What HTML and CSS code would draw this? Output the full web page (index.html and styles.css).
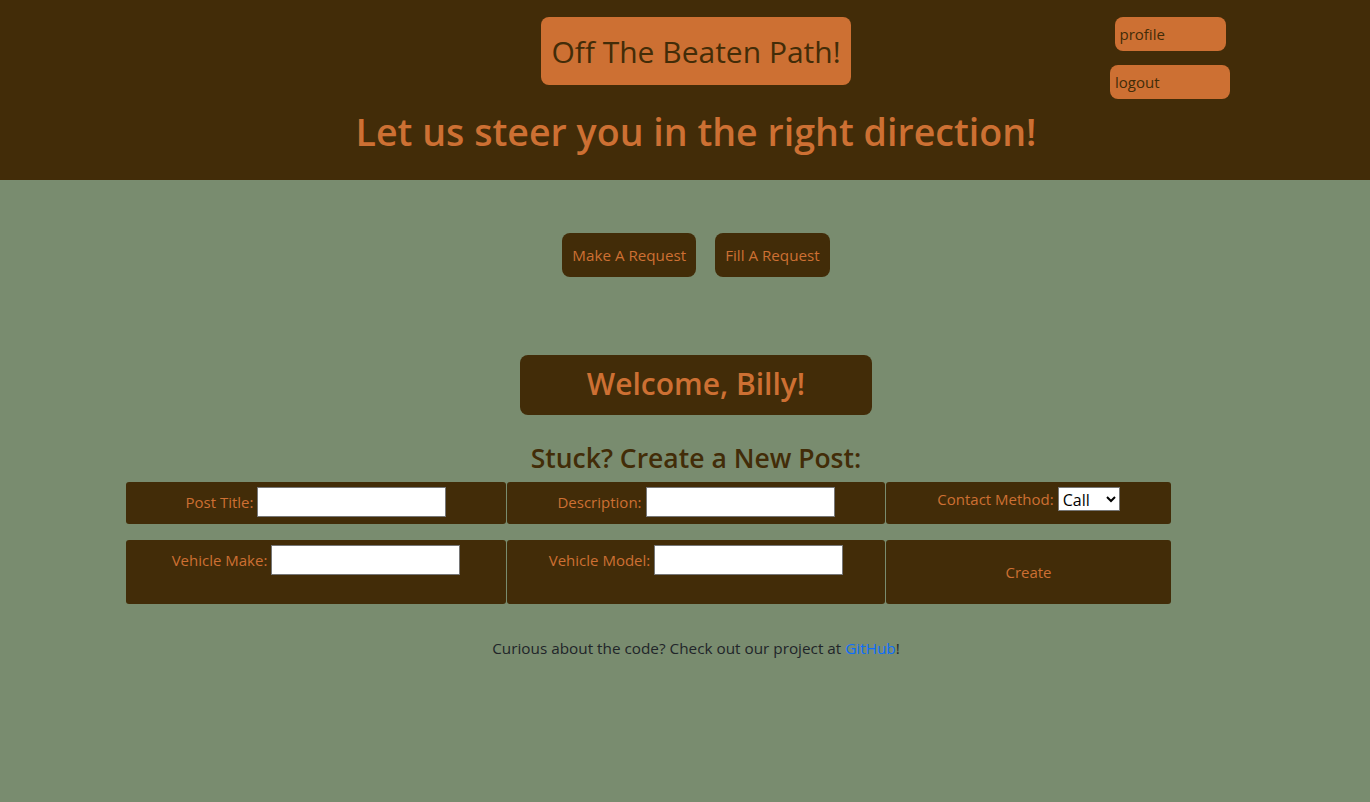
FILE: index.html
```html
<!DOCTYPE html>
<html lang="en">
<head>
<meta charset="utf-8">
<title>Off The Beaten Path!</title>
<link rel="stylesheet" href="styles.css">
</head>
<body>
<header class="site-header">
  <div class="brand-col">
    <a class="brand" href="#">Off The Beaten Path!</a>
  </div>
  <nav class="user-nav">
    <a class="nav-link nav-profile" href="#">profile</a>
    <a class="nav-link nav-logout" href="#">logout</a>
  </nav>
  <h1 class="tagline">Let us steer you in the right direction!</h1>
</header>

<main class="main">
  <div class="actions">
    <button class="action-btn">Make A Request</button>
    <button class="action-btn">Fill A Request</button>
  </div>

  <div class="welcome">Welcome, Billy!</div>

  <h2 class="form-title">Stuck? Create a New Post:</h2>

  <form class="post-form">
    <div class="cell">
      <label>Post Title: <input type="text" class="field"></label>
    </div>
    <div class="cell">
      <label>Description: <input type="text" class="field"></label>
    </div>
    <div class="cell">
      <label>Contact Method: <select class="select"><option>Call</option><option>Text</option><option>Email</option></select></label>
    </div>
    <div class="cell">
      <label>Vehicle Make: <input type="text" class="field"></label>
    </div>
    <div class="cell">
      <label>Vehicle Model: <input type="text" class="field"></label>
    </div>
    <div class="cell cell-center">
      <button type="button" class="create-btn">Create</button>
    </div>
  </form>

  <p class="footer-note">Curious about the code? Check out our project at <a href="#" class="gh">GitHub</a>!</p>
</main>
</body>
</html>
```

FILE: styles.css
```css
* { box-sizing: border-box; }
html, body {
  margin: 0;
  padding: 0;
}
body {
  background: #798c6f;
  font-family: "Open Sans", "Noto Sans", sans-serif;
  color: #212529;
  height: 802px;
  overflow: hidden;
}
.site-header {
  background: #422c08;
  height: 180px;
  display: grid;
  grid-template-columns: 1fr auto 1fr;
  grid-template-rows: 99px auto;
  padding-left: 22px;
}
.brand-col {
  grid-column: 2;
  grid-row: 1;
  padding-top: 17px;
}
.brand {
  display: flex;
  align-items: center;
  justify-content: center;
  width: 310px;
  height: 68px;
  background: #cd7033;
  color: #422c08;
  border-radius: 8px;
  font-size: 30px;
  text-decoration: none;
}
.user-nav {
  grid-column: 3;
  grid-row: 1;
  justify-self: end;
  margin-right: 140px;
  padding-top: 17px;
  width: 120px;
  display: flex;
  flex-direction: column;
  align-items: center;
  gap: 14px;
}
.nav-link {
  display: block;
  height: 34px;
  line-height: 34px;
  background: #cd7033;
  color: #422c08;
  border-radius: 8px;
  text-decoration: none;
  font-size: 15px;
  padding-left: 5px;
}
.nav-profile { width: 111px; }
.nav-logout { width: 120px; }
.tagline {
  grid-column: 1 / -1;
  grid-row: 2;
  margin: 9px 0 0 -22px;
  padding-left: 22px;
  text-align: center;
  color: #cd7033;
  font-size: 37.6px;
  font-weight: 600;
  line-height: 48px;
}
.main {
  padding-left: 22px;
}
.actions {
  display: flex;
  justify-content: center;
  gap: 19px;
  margin-top: 53px;
}
.action-btn {
  height: 44px;
  padding: 0 10px;
  background: #422c08;
  color: #cd7033;
  border: none;
  border-radius: 8px;
  font-family: inherit;
  font-size: 15.2px;
}
.welcome {
  width: 352px;
  height: 60px;
  margin: 78px auto 0;
  padding-bottom: 4px;
  background: #422c08;
  color: #cd7033;
  border-radius: 8px;
  font-size: 30px;
  font-weight: 600;
  display: flex;
  align-items: center;
  justify-content: center;
}
.form-title {
  margin: 24px 0 0;
  text-align: center;
  color: #422c08;
  font-size: 26.5px;
  font-weight: 600;
  line-height: 38px;
}
.post-form {
  margin: 5px 0 0 104px;
  display: grid;
  grid-template-columns: 380px 378px 285px;
  grid-template-rows: 42px 64px;
  column-gap: 1px;
  row-gap: 16px;
  width: 1045px;
}
.cell {
  background: #422c08;
  border-radius: 3px;
  padding-top: 5px;
  text-align: center;
  color: #cd7033;
  font-size: 15px;
}
.cell label {
  display: inline-flex;
  align-items: center;
  gap: 4px;
}
.cell-center {
  padding-top: 0;
  display: flex;
  align-items: center;
  justify-content: center;
}
.field {
  width: 189px;
  height: 30px;
  border: 1px solid #767676;
  background: #fff;
  padding: 1px 2px;
  font-size: 15px;
}
.select {
  width: 62px;
  height: 24px;
  font-size: 16px;
  font-family: inherit;
  border: 1px solid #767676;
  background: #fff;
  color: #000;
  border-radius: 0;
}
.create-btn {
  background: transparent;
  border: none;
  color: #cd7033;
  font-family: inherit;
  font-size: 15px;
}
.footer-note {
  margin: 34px 0 0;
  text-align: center;
  font-size: 15.3px;
}
.gh {
  color: #0d6efd;
  text-decoration: none;
}
```
